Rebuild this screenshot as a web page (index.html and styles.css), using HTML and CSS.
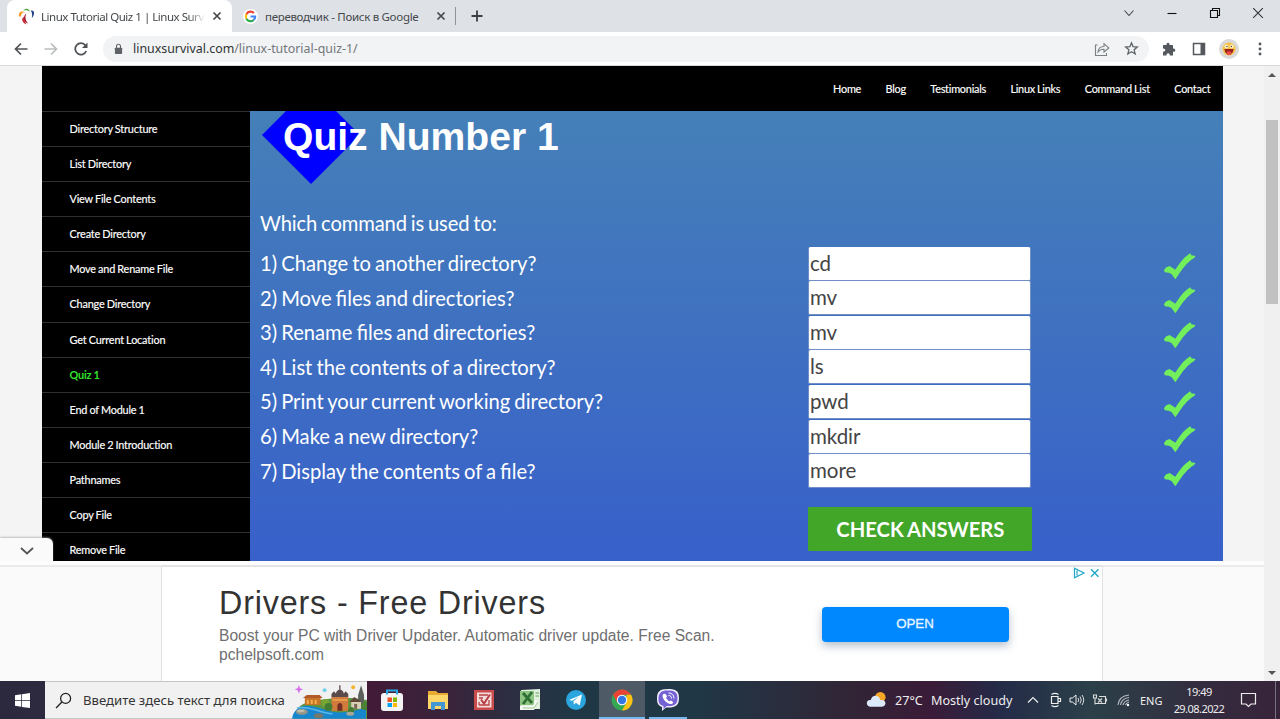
FILE: index.html
```html
<!DOCTYPE html>
<html lang="en">
<head>
<meta charset="utf-8">
<title>Linux Tutorial Quiz 1 | Linux Survival</title>
<link rel="stylesheet" href="styles.css">
</head>
<body>
<svg width="0" height="0" class="defs"><defs>
<symbol id="check" viewBox="0 0 36 30"><path d="M1 19 L3 16 L7 14.500 L13 18.500 C18 11 22 5 29 1 L30 3 L34.500 4 L33 6 C26 10 20 18 15.500 25 L13 28.500 L9 23 L6 21.500 L2 21Z" fill="#72ef5b"/></symbol>
<symbol id="x" viewBox="0 0 10 10"><path d="M1.500 1.500l7 7M8.500 1.500l-7 7" stroke="#454749" stroke-width="1.700"/></symbol>
</defs></svg>

<header class="tabstrip">
  <div class="tab active">
    <svg class="favicon" viewBox="0 0 16 16"><path d="M1 8c-1-4 2-6 6-4-3 0-4 1-4 4z" fill="#f49b2c"/><path d="M5 2.500c2-3 6-2 6 1-2-1.500-4-1.500-6-1z" fill="#55a84d"/><path d="M12 2.500c4-1 4 4 1 7 .5-3 .5-5-1-7z" fill="#25428c"/><path d="M5 8c-2 3-1 6 3 7.500-2-3-2-5-3-7.500z" fill="#c62832"/><path d="M8 5c-1.500 3-1.500 6 1.500 9.500-5-1-5-7-1.500-9.500z" fill="#a7192c"/></svg>
    <span class="tabtext first">Linux Tutorial Quiz 1 | Linux Survival</span>
    <svg class="close"><use href="#x"/></svg>
  </div>
  <div class="tab second">
    <svg class="google" viewBox="0 0 16 16"><circle cx="8" cy="8" r="8" fill="#fff"/><g fill="none" stroke-width="2.300"><path d="M11.700 4.200A5 5 0 0 0 3.600 5.700" stroke="#ea4335"/><path d="M3.600 5.700a5 5 0 0 0 0 4.600" stroke="#fbbc05"/><path d="M3.600 10.300a5 5 0 0 0 7.700 1.500" stroke="#34a853"/><path d="M11.300 11.800A5 5 0 0 0 13 8H8" stroke="#4285f4"/></g></svg>
    <span class="tabtext ru">переводчик - Поиск в Google</span>
    <svg class="close"><use href="#x"/></svg>
  </div>
  <span class="tabline"></span>
  <svg class="plus" viewBox="0 0 12 12"><path d="M6 .5v11M.5 6h11" stroke="#3c3f42" stroke-width="1.800"/></svg>
  <div class="winbtns">
    <svg viewBox="0 0 12 12"><path d="M1.500 3.500l4.500 5 4.500-5" stroke="#444" stroke-width="1.100" fill="none"/></svg>
    <svg viewBox="0 0 12 12"><path d="M1.500 6.500h9" stroke="#111" stroke-width="1.100"/></svg>
    <svg viewBox="0 0 12 12"><path d="M1.500 3.500h7v7h-7zM3.500 3.500v-2h7v7h-2" stroke="#111" stroke-width="1.100" fill="none"/></svg>
    <svg viewBox="0 0 12 12"><path d="M1.200 1.200l9.600 9.600M10.800 1.200l-9.600 9.600" stroke="#333" stroke-width="1.100"/></svg>
  </div>
</header>

<div class="toolbar">
  <svg class="nav" viewBox="0 0 16 16"><path d="M14.500 8H2.500M8 2.500L2.500 8 8 13.500" stroke="#505356" stroke-width="1.700" fill="none"/></svg>
  <svg class="nav" viewBox="0 0 16 16"><path d="M1.500 8h12M8 2.500L13.500 8 8 13.500" stroke="#babcbe" stroke-width="1.700" fill="none"/></svg>
  <svg class="nav" viewBox="0 0 16 16"><path d="M13.200 10A5.700 5.700 0 1 1 12.400 4.400" stroke="#505356" stroke-width="1.800" fill="none"/><path d="M14.500 1.500V7H9z" fill="#505356"/></svg>
  <div class="omnibox">
    <svg class="lock" viewBox="0 0 10 12"><rect x="1" y="4.500" width="8" height="7" rx=".8" fill="#5f6368"/><path d="M2.800 5V3a2.200 2.200 0 0 1 4.400 0v2" stroke="#5f6368" stroke-width="1.200" fill="none"/></svg>
    <span class="url"><b>linuxsurvival.com</b>/linux-tutorial-quiz-1/</span>
    <svg class="share" viewBox="0 0 16 16"><path d="M3.500 4H1.500v10.500h11V12M4 11c.3-4 2.500-5.500 6-5.500V2.700L14.800 7 10 11V8.300C7 8.200 5.500 9 4 11z" stroke="#7c8083" stroke-width="1.100" fill="none"/></svg>
    <svg class="star" viewBox="0 0 16 16"><path d="M8 2l1.700 4.100 4.500.4-3.400 2.900 1.100 4.400L8 11.400l-3.900 2.400 1.100-4.400-3.400-2.900 4.500-.4z" stroke="#5f6368" stroke-width="1.400" fill="none"/></svg>
  </div>
  <svg class="t1" viewBox="0 0 16 16"><path d="M2 4h3.600c-.7-3 3.500-3 2.900 0H12v3.500c3-.7 3 4 0 3.300V14.500H8.800c.3-3-3.600-3-3.300 0H2v-3.700c3 .2 3-3.400 0-3.200z" fill="#55595d"/></svg>
  <svg class="t2" viewBox="0 0 14 14"><path d="M1.500 1.500h11v11h-11z" fill="#fff" stroke="#55595d" stroke-width="1.500"/><path d="M8.500 1h4.500v12H8.500z" fill="#55595d"/></svg>
  <svg class="t3" viewBox="0 0 20 20"><circle cx="10" cy="10" r="10" fill="#d9d9da"/><circle cx="10" cy="10" r="6.500" fill="#f5c343"/><circle cx="7.500" cy="7.500" r="2" fill="#fff2c4"/><circle cx="12.700" cy="7.500" r="2" fill="#fff2c4"/><circle cx="8" cy="7.500" r=".7" fill="#533"/><circle cx="12.300" cy="7.500" r=".7" fill="#533"/><path d="M5.500 10h9c0 7-9 7-9 0z" fill="#9b2020"/><path d="M8 12.500h4V16H8z" fill="#ed4e4a"/></svg>
  <svg class="t4" viewBox="0 0 4 14"><g fill="#55595d"><circle cx="2" cy="2" r="1.450"/><circle cx="2" cy="7" r="1.450"/><circle cx="2" cy="12" r="1.450"/></g></svg>
</div>

<div class="viewport">
  <div class="page">
    <div class="site">
      <nav class="topnav"><a>Home</a><a>Blog</a><a>Testimonials</a><a>Linux Links</a><a>Command List</a><a>Contact</a></nav>
      <div class="columns">
        <ul class="sidebar">
          <li>Directory Structure</li><li>List Directory</li><li>View File Contents</li><li>Create Directory</li><li>Move and Rename File</li><li>Change Directory</li><li>Get Current Location</li><li class="current">Quiz 1</li><li>End of Module 1</li><li>Module 2 Introduction</li><li>Pathnames</li><li>Copy File</li><li>Remove File</li>
        </ul>
        <main class="quiz">
          <h1><span class="diamond"></span><span class="title">Quiz Number 1</span></h1>
          <p class="lead">Which command is used to:</p>
          <div class="row"><span>1) Change to another directory?</span><div class="field">cd</div><svg><use href="#check"/></svg></div>
          <div class="row"><span>2) Move files and directories?</span><div class="field">mv</div><svg><use href="#check"/></svg></div>
          <div class="row"><span>3) Rename files and directories?</span><div class="field">mv</div><svg><use href="#check"/></svg></div>
          <div class="row"><span>4) List the contents of a directory?</span><div class="field">ls</div><svg><use href="#check"/></svg></div>
          <div class="row"><span>5) Print your current working directory?</span><div class="field">pwd</div><svg><use href="#check"/></svg></div>
          <div class="row"><span>6) Make a new directory?</span><div class="field">mkdir</div><svg><use href="#check"/></svg></div>
          <div class="row"><span>7) Display the contents of a file?</span><div class="field">more</div><svg><use href="#check"/></svg></div>
          <div class="submit">CHECK ANSWERS</div>
        </main>
      </div>
    </div>
    <div class="collapse"><svg viewBox="0 0 14 8"><path d="M1 1l6 5.500L13 1" stroke="#555" stroke-width="1.800" fill="none"/></svg></div>
    <section class="adbar">
      <div class="ad">
        <div class="adcopy"><div class="adtitle">Drivers - Free Drivers</div><div class="adline a1">Boost your PC with Driver Updater. Automatic driver update. Free Scan.</div><div class="adline a2">pchelpsoft.com</div></div>
        <div class="open">OPEN</div>
        <svg class="adchoices" viewBox="0 0 28 12"><path d="M1.500 1.200v9.600L11 6zM4 3.500v5" stroke="#20a8c6" stroke-width="1.200" fill="none"/><path d="M18 2.200l7.500 7.600M25.500 2.200L18 9.800" stroke="#20a8c6" stroke-width="1.400"/></svg>
      </div>
    </section>
  </div>
  <div class="scrollbar"><i class="up"></i><div class="thumb"></div><i class="down"></i></div>
</div>

<footer class="taskbar">
  <div class="start"><svg viewBox="0 0 16 16"><path d="M0 2.300l6.700-1v6.300H0zM7.500 1.200L16 0v7.600H7.500zM0 8.400h6.700v6.300L0 13.700zM7.500 8.400H16V16l-8.500-1.200z" fill="#fff"/></svg></div>
  <div class="search">
    <svg class="mag" viewBox="0 0 16 16"><circle cx="10" cy="6" r="4.700" stroke="#222" stroke-width="1.200" fill="none"/><path d="M6.500 9.500L1 15" stroke="#222" stroke-width="1.300"/></svg>
    <span class="searchtext">Введите здесь текст для поиска</span>
    <svg class="scene" viewBox="0 0 76 37">
      <path d="M2 37c1-8 5-14 12-16 18-5 44-7 62-3v19z" fill="#5d9440"/>
      <path d="M0 37c1-6 4-11 12-13 10-1 20 4 29 6 12 2 25-2 34-4v11z" fill="#1686cd"/>
      <path d="M5 26c12-3 22 5 36 6" stroke="#5eb9e9" stroke-width="1.500" fill="none"/>
      <path d="M13 15h16v8H13z" fill="#c87527"/><path d="M11 16l4-3h13l3 3z" fill="#b05a2a"/><path d="M15 18h2v4h-2zM19 18h2v4h-2zM23 18h2v4h-2z" fill="#f3b04c"/>
      <path d="M40 15h17v14H40z" fill="#d07a3c"/><path d="M40 15v-3l2.500-3 2.500 3v3zM52 15v-3l2.500-3 2.500 3v3zM44.500 12c0-6 8-6 8 0v3h-8z" fill="#5b4a4b"/><path d="M48.500 3v6" stroke="#5b4a4b" stroke-width="1.300"/><path d="M46 29v-5c0-4 5-4 5 0v5z" fill="#732e26"/><path d="M41 18h15" stroke="#edaa54" stroke-width="1.500"/>
      <path d="M67 13l3-10 3 10v14h-6z" fill="#5b605a"/><path d="M60 19h10v8H60z" fill="#d8cfb6"/><path d="M58 20l5-5 8 5z" fill="#614837"/><path d="M63 22h3v5h-3z" fill="#796652"/>
      <circle cx="34" cy="21" r="4" fill="#78a534"/><circle cx="37" cy="25" r="4" fill="#427b34"/><circle cx="60" cy="28" r="3" fill="#427b34"/><circle cx="74" cy="24" r="4" fill="#4b8235"/>
      <ellipse cx="10" cy="30" rx="6" ry="3" fill="#93958a"/><ellipse cx="27" cy="34" rx="5" ry="2.500" fill="#77786c"/><ellipse cx="59" cy="32" rx="4" ry="2" fill="#aaa894"/><ellipse cx="9" cy="29" rx="4" ry="1.500" fill="#c0bda8"/>
      <path d="M7 3l1.200 3 3 1.200-3 1.200L7 11.500 5.800 8.400l-3-1.200 3-1.200z" fill="#d86df0"/><circle cx="33" cy="8" r="2" fill="#6ed2e8"/><circle cx="62" cy="5" r="2" fill="#f5b52f"/>
    </svg>
  </div>
  <div class="apps">
    <div><svg viewBox="0 0 24 24"><rect x="1" y="5" width="22" height="18" rx="3" fill="#f4f3f4"/><path d="M7 6.500V2.500h10v4" stroke="#28a9e5" stroke-width="2" fill="none"/><path d="M7.500 9.500H12V14H7.500z" fill="#ef5227"/><path d="M13 9.500h4V14h-4z" fill="#7fba00"/><path d="M7.500 15H12v4H7.500z" fill="#00a4ef"/><path d="M13 15h4v4h-4z" fill="#ffb900"/></svg></div>
    <div><svg viewBox="0 0 24 24"><path d="M2 5V3h8l2 2h10v16H2z" fill="#e8aa32"/><path d="M2 7h20v14H2z" fill="#ffd66a"/><path d="M5 14h14v8h-4v-4H9v4H5z" fill="#4296d2"/></svg></div>
    <div><svg viewBox="0 0 24 24"><path d="M2 2h20v20H2z" fill="#c94b4b"/><path d="M5 4.500h14.500v15H5z" fill="#f3dcda"/><path d="M7 7h9M7 10h4M7 17h10v-5M7 14v3" stroke="#b94347" stroke-width="1.300" fill="none"/><path d="M9 11.500l3 4 6-9" stroke="#b73b40" stroke-width="1.900" fill="none"/></svg></div>
    <div><svg viewBox="0 0 24 24"><path d="M3 2l19-1v20H2z" fill="#e2f0df"/><path d="M2 3h14v14H2z" fill="#8dc482"/><path d="M5 5l9 10M14 4L5 16" stroke="#2f7035" stroke-width="2.800"/><path d="M17.500 5h3.500M17.500 8h3.500" stroke="#61a55d"/><path d="M2 18h13l2-6 4 1.500-5 8.500H2z" fill="#f7faf4"/><path d="M5 20h11l4-6" stroke="#9bc695" fill="none"/></svg></div>
    <div><svg viewBox="0 0 24 24"><circle cx="12" cy="12" r="10" fill="#2ba5dd"/><path d="M5 12l13-5.500-2.300 11-3.800-2.800-2 2-.5-3.500 5.600-4.700-6.900 4.300z" fill="#fff"/></svg></div>
    <div class="active-app"><svg viewBox="0 0 24 24"><circle cx="12" cy="12" r="10.500" fill="#34a853"/><path d="M3 6.700A10.500 10.500 0 0 1 21.100 6.700H12L7.500 14.700z" fill="#ea4335"/><path d="M21.100 6.700A10.500 10.500 0 0 1 12 22.500l4.500-8V6.700z" fill="#fbc116"/><circle cx="12" cy="12" r="5.200" fill="#fff"/><circle cx="12" cy="12" r="4.200" fill="#3478e5"/></svg></div>
    <div class="running"><svg viewBox="0 0 24 24"><path d="M12 1C3 1 1 4 1 11c0 5 2 7 5 8v4l4-3.500C20 20 23 17 23 10S20 1 12 1z" fill="#f0eaff"/><path d="M12 2.500C5 2.500 2.500 5 2.500 11c0 4 1.500 6 5 7v3l3-3C19 18.500 21.500 16 21.500 10S18 2.500 12 2.500z" fill="#7461d4"/><path d="M7.500 6c-3.500 2.500 3.500 11 8 10 3.500-1.500.5-3-1-3.500l-1.500 1-3-3.500 1-1.500c-.5-1.500-1.500-3.500-3.500-2.500z" fill="#fff"/><path d="M12.500 5c3.500 0 5.500 2 5.500 5.500M12.500 7.500c2 0 3 1 3 3" stroke="#fff" fill="none"/></svg></div>
  </div>
  <div class="tray">
    <svg class="weather" viewBox="0 0 22 18"><circle cx="15" cy="6" r="5.500" fill="#f9a726"/><path d="M5 16c-6 0-5-8 0-7 1-6 9-6 10 0 7-1 7 7 1 7z" fill="#dce9fa"/></svg>
    <span class="temp">27°C</span><span class="cloudy">Mostly cloudy</span>
    <svg class="chev" viewBox="0 0 14 14"><path d="M2 9.500l5-5 5 5" stroke="#eee" stroke-width="1.200" fill="none"/></svg>
    <svg class="meet" viewBox="0 0 14 16"><path d="M2.500 4.500h6.500v7H2.500zM9 6.500h2.500v3H9M2.500 2.500Q6 .3 9.500 2.500M2.500 13.500Q6 15.700 9.500 13.500" stroke="#eee" stroke-width="1.200" fill="none"/></svg>
    <svg class="sound" viewBox="0 0 16 14"><path d="M1 5h2.500L7 2v10L3.500 9H1z" stroke="#eee" fill="none"/><path d="M9 5q1.500 2 0 4M11 3.500q2.500 3.500 0 7M13 2q3.500 5 0 10" stroke="#ddd" fill="none"/></svg>
    <svg class="battery" viewBox="0 0 18 14"><path d="M2.500 2h3v3h-3zM4 5v6.500M8 3.500h6.500v7H4M15.500 5.500v3M7 5.500l4 4M11 5.500l-4 4" stroke="#ddd" stroke-width="1.100" fill="none"/></svg>
    <svg class="wifi" viewBox="0 0 14 14"><path d="M1 12Q2 3 12 2M3.500 12Q4.500 5.500 12 4.500M6 12q1-4 6-5M8.500 12q.7-2 3.500-3" stroke="#b9bcc4" stroke-width="1.100" fill="none"/><circle cx="11" cy="12" r="1.200" fill="#fff"/></svg>
    <span class="eng">ENG</span>
    <div class="clock"><span class="time">19:49</span><span class="date">29.08.2022</span></div>
    <svg class="note" viewBox="0 0 18 18"><path d="M1.500 2.500h14v10.500h-4.500l-2.500 2.500-2.500-2.500H1.500z" stroke="#eee" stroke-width="1.200" fill="none"/></svg>
    <span class="edge"></span>
  </div>
</footer>
</body>
</html>
```
FILE: styles.css
```css
* { box-sizing: border-box; }
body { margin: 0; width: 1280px; height: 719px; overflow: hidden; display: flex; flex-direction: column; background: #fff; font-family: "Noto Sans", sans-serif; }
svg { display: block; flex: none; }
span, a { white-space: nowrap; }
.defs { position: absolute; }

.tabstrip { height: 32px; flex: none; display: flex; align-items: center; background: #dee1e6; }
.tab { display: flex; align-items: center; height: 32px; flex: none; }
.tab.active { width: 225px; margin-left: 7px; padding-left: 11px; background: #fff; border-radius: 8px 8px 0 0; }
.favicon { width: 17px; height: 17px; }
.tabtext { font-size: 11.5px; color: #45484b; overflow: hidden; flex: none; }
.first { width: 164px; margin-left: 6px; letter-spacing: -.48px; -webkit-mask-image: linear-gradient(90deg, #000 90%, transparent); mask-image: linear-gradient(90deg, #000 90%, transparent); }
.close { width: 10px; height: 10px; margin-left: 7px; }
.second { width: 223px; padding-left: 11px; }
.google { width: 15px; height: 15px; }
.ru { width: 158px; margin-left: 7px; letter-spacing: -.3px; }
.second .close { margin-left: 13px; }
.tabline { width: 1px; height: 18px; background: #8f9297; }
.plus { width: 12px; height: 12px; margin-left: 15px; }
.winbtns { margin-left: auto; display: flex; gap: 31px; padding: 0 16px 6px 0; }
.winbtns svg { width: 12px; height: 12px; }

.toolbar { height: 34px; flex: none; display: flex; align-items: center; padding-left: 13px; background: #fff; border-bottom: 1px solid #d8dadc; }
.nav { width: 16px; height: 16px; margin-right: 14px; }
.omnibox { width: 1046px; height: 26px; border-radius: 13px; background: #f1f3f4; display: flex; align-items: center; padding-left: 11px; }
.lock { width: 9px; height: 12px; }
.url { margin-left: 10px; font-size: 12.400px; color: #73777b; }
.url b { font-weight: 400; color: #303336; }
.share { width: 16px; height: 16px; margin-left: auto; }
.star { width: 15px; height: 15px; margin: 0 10px 0 14px; }
.t1 { width: 16px; height: 16px; margin-left: 12px; }
.t2 { width: 14px; height: 14px; margin-left: 15px; }
.t3 { width: 20px; height: 20px; margin-left: 13px; }
.t4 { width: 4px; height: 14px; margin-left: 19px; }

.viewport { height: 615px; flex: none; display: flex; }
.page { width: 1264px; display: flex; flex-direction: column; background: #f4f4f4; position: relative; }
.site { width: 1181px; height: 495px; margin-left: 42px; overflow: hidden; background: #000; font-family: Lato, sans-serif; }
.topnav { height: 45px; display: flex; justify-content: flex-end; align-items: center; gap: 24.400px; padding-right: 12.700px; font-size: 10.900px; color: #fff; letter-spacing: -.240px; word-spacing: -.500px; }
.topnav a { -webkit-text-stroke: .15px #fff; }
.columns { display: flex; height: 450px; }
.sidebar { width: 208px; margin: 0; padding: 0; list-style: none; }
.sidebar li { height: 35.100px; padding-left: 27.500px; border-top: 1px solid #303030; line-height: 34.500px; font-size: 10.900px; color: #fff; -webkit-text-stroke: .15px #fff; white-space: nowrap; letter-spacing: -.190px; word-spacing: -.400px; }
.sidebar .current { color: #32e02c; font-weight: 700; -webkit-text-stroke: 0; }
.quiz { width: 973px; background: linear-gradient(#4580b8, #3860ca); color: #fff; font-size: 20.200px; padding: 0 0 0 10px; }
.quiz h1 { height: 94px; margin: 0; padding: 3px 0 0 23px; position: relative; overflow: hidden; font: 700 39.100px/46px "Liberation Sans", sans-serif; }
.diamond { position: absolute; left: 2px; top: -25px; width: 98px; height: 98px; background: #00f; clip-path: polygon(50% 0, 100% 50%, 50% 100%, 0 50%); }
.title { position: relative; }
.lead { margin: 0; height: 41.300px; line-height: 36px; letter-spacing: -.120px; word-spacing: -1.200px; }
.row { height: 34.600px; display: flex; align-items: center; }
.row > span { width: 548.400px; padding-bottom: 1px; word-spacing: -1.100px; }
.field { width: 222.600px; height: 34px; border: 1px solid #6f8fc6; border-width: 0 1px 1px; background: #fff; color: #444; font-size: 20.500px; line-height: 33px; padding-left: .5px; border-radius: 2px; }
.row svg { width: 34px; height: 29px; margin: 5px 0 0 132px; }
.submit { width: 224px; height: 44px; margin: 19px 0 0 548.400px; background: #42a629; text-align: center; line-height: 44px; font-weight: 700; font-size: 20.200px; word-spacing: -1px; border-radius: 1px; }
.collapse { position: absolute; left: 0; top: 472px; width: 53px; height: 24px; background: #fafafa; border-radius: 0 6px 0 0; box-shadow: 0 -1px 2px #9999; display: flex; align-items: center; justify-content: center; padding-top: 2px; }
.collapse svg { width: 14px; height: 8px; }
.adbar { height: 120px; position: relative; background: #fafafa; border-top: 4px solid #fdfdfd; padding-left: 161px; font-family: "Liberation Sans", sans-serif; box-shadow: inset 0 2px #ebebeb; }
.ad { width: 942px; height: 116px; display: flex; background: #fff; border: 1px solid #e3e3e3; border-width: 2px 1px 0; padding-left: 57px; }
.adcopy { width: 602.500px; padding-top: 17px; }
.adtitle { font-size: 32.300px; line-height: 38px; color: #333; letter-spacing: .830px; white-space: nowrap; }
.adline { font-size: 15.600px; line-height: 19.500px; color: #6f6f6f; letter-spacing: .010px; white-space: nowrap; }
.adline.a1 { margin-top: 3.500px; }
.open { width: 187px; height: 35px; margin-top: 39.500px; background: #0088ff; color: #e9f5ff; -webkit-text-stroke: .3px #e9f5ff; border-radius: 4px; text-align: center; line-height: 34px; font-size: 13.300px; box-shadow: 0 4px 9px #71819980; }
.adchoices { width: 28px; height: 12px; margin-left: 64px; }
.scrollbar { width: 16px; background: #f0f0f0; display: flex; flex-direction: column; align-items: center; }
.scrollbar i { width: 8px; height: 4px; background: #555; }
.up { clip-path: polygon(50% 0, 100% 100%, 0 100%); margin: 7px 0 43px; }
.thumb { width: 12px; height: 184px; background: #c1c1c1; margin-bottom: auto; }
.down { clip-path: polygon(0 0, 100% 0, 50% 100%); margin-bottom: 6px; }

.taskbar { height: 38px; flex: none; display: flex; background: linear-gradient(90deg, #2c293f 0, #2d293e 45px, #421b38 370px, #39243b 450px, #203746 570px, #203746 700px, #312536 850px, #3a1b38 930px, #242b48 1000px, #2b4049 1090px, #342b3e 1210px, #38243a 1280px); color: #eee; }
.start { width: 45px; display: flex; justify-content: center; align-items: center; }
.start svg { width: 15px; height: 15px; }
.search { width: 322px; display: flex; align-items: center; background: #f1f1f1; border: 1px solid #c5c5c5; border-width: 1px 0; padding-left: 10px; }
.mag { width: 17px; height: 17px; }
.searchtext { width: 210px; margin-left: 11px; color: #353535; font-size: 13.150px; }
.scene { width: 75px; height: 37px; margin-left: -1px; }
.apps { display: flex; margin-left: 2px; }
.apps > div { width: 46px; display: flex; align-items: center; justify-content: center; }
.apps svg { width: 24px; height: 24px; }
.apps .active-app { background: #4e5b66; box-shadow: inset 0 -2px #76b9ed; }
.apps .running { background: linear-gradient(#76b9ed, #76b9ed) center bottom / 38px 2px no-repeat; }
.tray { margin-left: auto; display: flex; align-items: center; font-size: 12.600px; }
.weather { width: 21px; height: 18px; }
.temp { margin-left: 8px; width: 36px; }
.cloudy { width: 93px; }
.chev { width: 14px; height: 14px; margin-left: 2px; }
.meet { width: 14px; height: 16px; margin-left: 9px; }
.sound { width: 16px; height: 14px; margin-left: 6px; }
.battery { width: 18px; height: 14px; margin-left: 6px; }
.wifi { width: 14px; height: 14px; margin-left: 8px; }
.eng { width: 23px; margin-left: 9px; font-size: 11px; }
.clock { width: 52px; margin-left: 10px; display: flex; flex-direction: column; align-items: center; font-size: 11px; letter-spacing: -.550px; line-height: 17px; }
.note { width: 18px; height: 18px; margin-left: 15px; }
.edge { width: 1px; height: 38px; margin: 0 4px 0 17px; background: #777080; }
```
